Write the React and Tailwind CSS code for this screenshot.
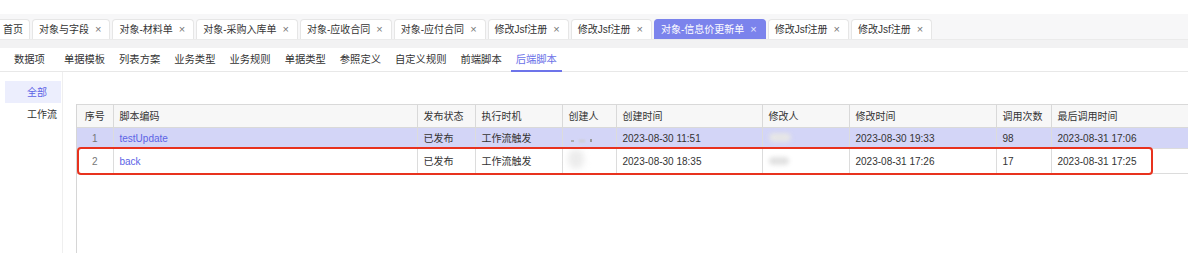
import React from "react";

const tabs = [
  { t: "首页", close: false },
  { t: "对象与字段", close: true },
  { t: "对象-材料单", close: true },
  { t: "对象-采购入库单", close: true },
  { t: "对象-应收合同", close: true },
  { t: "对象-应付合同", close: true },
  { t: "修改Jsf注册", close: true },
  { t: "修改Jsf注册", close: true },
  { t: "对象-信息价更新单", close: true, active: true },
  { t: "修改Jsf注册", close: true },
  { t: "修改Jsf注册", close: true },
];

const subTabs = ["数据项", "单据模板", "列表方案", "业务类型", "业务规则", "单据类型", "参照定义", "自定义规则", "前端脚本", "后端脚本"];

const cols = [
  { h: "序号", w: 36, center: true },
  { h: "脚本编码", w: 304 },
  { h: "发布状态", w: 58 },
  { h: "执行时机", w: 87 },
  { h: "创建人", w: 54 },
  { h: "创建时间", w: 146 },
  { h: "修改人", w: 87 },
  { h: "修改时间", w: 147 },
  { h: "调用次数", w: 55 },
  { h: "最后调用时间", w: 137 },
];

const rows = [
  ["1", "testUpdate", "已发布", "工作流触发", "c1", "2023-08-30 11:51", "m1", "2023-08-30 19:33", "98", "2023-08-31 17:06"],
  ["2", "back", "已发布", "工作流触发", "c2", "2023-08-30 18:35", "m2", "2023-08-31 17:26", "17", "2023-08-31 17:25"],
];

function Blur({ kind }) {
  if (kind === "c1")
    return (
      <span className="inline-flex items-center gap-[5px] pl-[2px]">
        <span className="w-[3px] h-[2px] bg-[#aaa] blur-[0.5px]" />
        <span className="w-[6px] h-[2px] bg-[#ccc] blur-[1px]" />
        <span className="w-[2px] h-[3px] bg-[#999] blur-[0.5px]" />
      </span>
    );
  if (kind === "c2")
    return <span className="inline-block w-[16px] h-[20px] rounded-full bg-[#ececec] blur-[3px] -ml-[1px]" />;
  if (kind === "m1")
    return <span className="inline-block w-[22px] h-[9px] rounded-full bg-[#e6e6e6] blur-[2px]" />;
  return <span className="inline-block w-[20px] h-[8px] rounded-full bg-[#e2e2e2] blur-[2px] mt-[4px]" />;
}

export default function App() {
  return (
    <div
      className="w-[1188px] h-[253px] bg-white overflow-hidden text-[10px] text-[#333]"
      style={{ fontFamily: '"Liberation Sans", "Noto Sans CJK SC", sans-serif' }}
    >
      <div className="h-[14px]" />
      {/* tab bar */}
      <div className="bg-[#f7f7f8] h-[26px] flex items-end gap-[2px] pt-[5px] border-b border-[#ebebeb]">
        {tabs.map((tb, i) => (
          <div
            key={i}
            className={
              "h-[20px] flex items-center rounded-t-[4px] border border-b-0 whitespace-nowrap " +
              (tb.active
                ? "bg-[#7b83ec] border-[#7b83ec] text-white"
                : "bg-white border-[#e6e6e6] text-[#333]") +
              (i === 0 ? " pl-[3px] pr-[6px] rounded-tl-none border-l-0" : " pl-[6px] pr-[8px]")
            }
          >
            <span>{tb.t}</span>
            {tb.close && (
              <span className={"ml-[6px] text-[11px] leading-none " + (tb.active ? "text-[#e6e8ff]" : "text-[#777]")}>×</span>
            )}
          </div>
        ))}
      </div>
      <div className="h-[8px] bg-[#f2f2f3]" />
      {/* sub tabs */}
      <div className="h-[24px] flex items-stretch pl-[9px] gap-[4px] border-b border-[#e8e8e8] text-[10.3px]">
        {subTabs.map((s, i) => {
          const active = i === subTabs.length - 1;
          return (
            <div
              key={i}
              className={
                "relative px-[5px] pt-[1px] flex items-center whitespace-nowrap " +
                (i === 0 ? "mr-[5px] " : "") +
                (active ? "text-[#6a71e8]" : "text-[#333]")
              }
            >
              {s}
              {active && <span className="absolute left-0 right-0 -bottom-[1px] h-[2px] bg-[#6d74ea]" />}
            </div>
          );
        })}
      </div>
      {/* body */}
      <div className="flex h-[181px]">
        <div className="w-[63px] border-r border-[#efefef] pt-[9px] pl-[5px] shrink-0">
          <div className="w-[56px] h-[22px] bg-[#eceefd] text-[#5d64e6] flex items-center pl-[22px]">全部</div>
          <div className="w-[56px] h-[22px] flex items-center pl-[22px] text-[#333]">工作流</div>
        </div>
        <div className="flex-1 pl-[13px] pt-[32px]">
          <div className="relative h-[160px] border-l border-[#d6d6d6]">
            <table className="border-collapse table-fixed" style={{ width: 1111 }}>
              <colgroup>
                {cols.map((c, i) => (
                  <col key={i} style={{ width: c.w }} />
                ))}
              </colgroup>
              <thead>
                <tr className="h-[23px] bg-[#f7f7f7]">
                  {cols.map((c, i) => (
                    <th
                      key={i}
                      className={
                        "font-normal text-[#333] border-t border-b border-[#d9d9d9] px-[6px] whitespace-nowrap " +
                        (i < cols.length - 1 ? "border-r " : "") +
                        (c.center ? "text-center" : "text-left")
                      }
                    >
                      {c.h}
                    </th>
                  ))}
                </tr>
              </thead>
              <tbody>
                {rows.map((r, ri) => (
                  <tr key={ri} className={"h-[21px] " + (ri === 0 ? "bg-[#d3d5f7]" : "bg-white")}>
                    {r.map((v, ci) => (
                      <td
                        key={ci}
                        className={
                          "border-b border-[#dcdcdc] px-[6px] whitespace-nowrap overflow-visible " +
                          (ci < r.length - 1 ? "border-r " : "") +
                          (ci === 0 ? "text-center text-[#777] " : "text-left ") +
                          (ci === 1 ? "text-[#5d64e6] " : ci === 0 ? "" : "text-[#333] ")
                        }
                      >
                        {ci === 4 || ci === 6 ? <Blur kind={v} /> : v}
                      </td>
                    ))}
                  </tr>
                ))}
              </tbody>
            </table>
            <div className="absolute left-0 top-[43px] w-[1076px] h-[28px] border-2 border-[#e8321e] rounded-[4px]" />
          </div>
        </div>
      </div>
    </div>
  );
}
